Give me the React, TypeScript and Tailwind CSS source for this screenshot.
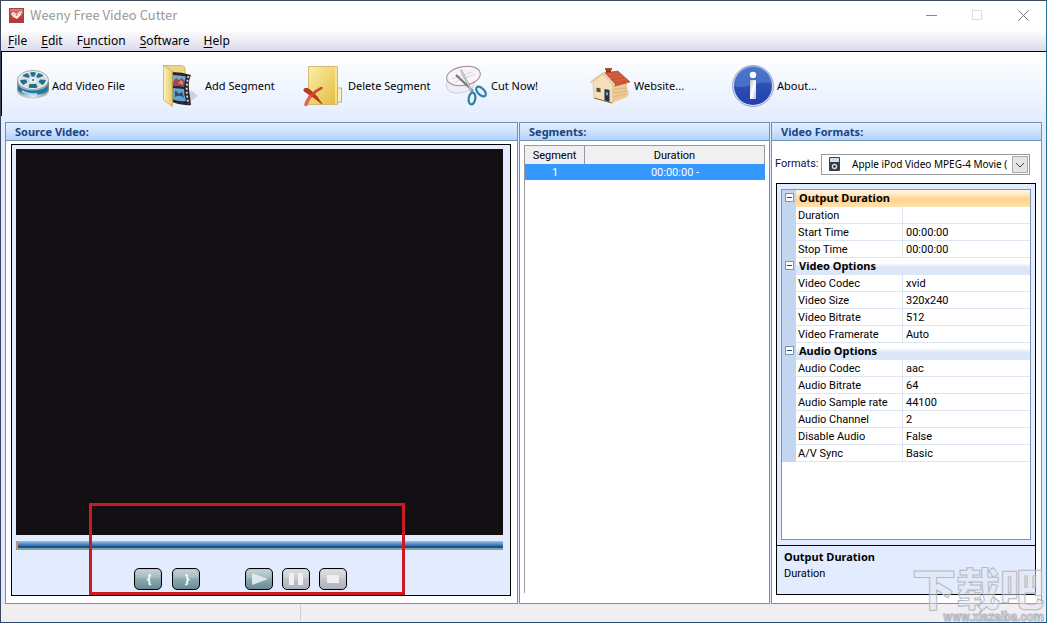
import { Fragment, useState } from "react";
import type { ReactNode } from "react";

const mnemonics = ["File", "Edit", "Function", "Software", "Help"];

function Logo() {
  return (
    <svg viewBox="0 0 15 15" className="h-[15px] w-[15px]">
      <defs>
        <linearGradient id="logo" x1="0" y1="0" x2="0" y2="1">
          <stop offset="0" stopColor="#d98a84" />
          <stop offset="0.5" stopColor="#c9403c" />
          <stop offset="1" stopColor="#b8332f" />
        </linearGradient>
      </defs>
      <rect width="15" height="15" fill="url(#logo)" />
      <rect x="0.5" y="0.5" width="14" height="14" fill="none" stroke="#9d4643" />
      <path d="M2 6l2-2 2 1 2 1 2-2 3-1-1 4-2 2-2 2-2-1-2-1z" fill="#fbe9e7" />
      <circle cx="7.500" cy="7" r="1" fill="#e0736c" />
      <path d="M4 6l1 1M10 5l1 1" stroke="#e0736c" />
    </svg>
  );
}

function Icon({ children }: { children: ReactNode }) {
  return (
    <svg viewBox="0 0 44 44" className="h-11 w-11 shrink-0" aria-hidden="true">
      {children}
    </svg>
  );
}

function ReelIcon() {
  return (
    <Icon>
      <defs>
        <linearGradient id="rim" x1="0" x2="1">
          <stop offset="0" stopColor="#8d9398" />
          <stop offset="0.5" stopColor="#e8ecee" />
          <stop offset="1" stopColor="#7d8489" />
        </linearGradient>
      </defs>
      <ellipse cx="28" cy="27" rx="16" ry="7.500" fill="#c3c8ce" />
      <path d="M12 17v8c1 6 8 8.500 16 8.500s15-2.500 16-8.500v-8z" fill="url(#rim)" />
      <path d="M13 21c3 7 27 7 30 0v5c-4 6.500-26 6.500-30 0z" fill="#1f7ba0" />
      <path d="M17 27c4 3 11 3.500 15 3" stroke="#b8dbe7" strokeWidth="2" fill="none" />
      <ellipse cx="28" cy="16" rx="15.500" ry="9.500" fill="#f0f3f4" stroke="#8a9298" strokeWidth="0.8" />
      <ellipse cx="28" cy="16" rx="13.500" ry="8" fill="#d8dee1" />
      <g fill="#236f92">
        <path d="M25 8.500q3-.8 6 0l-1.500 4h-3z" />
        <path d="M33.500 9q3.500 1 5 3l-5.500 2-2-1.500z" />
        <path d="M35 15.500l6 .500q-.5 3-3.500 5l-4-3z" />
        <path d="M24.500 20h7l1 3.500q-4.500 1.200-9 0z" />
        <path d="M21 15.500l-6 .500q.5 3 3.500 5l4-3z" />
        <path d="M22.500 9q-3.500 1-5 3l5.500 2 2-1.500z" />
      </g>
      <ellipse cx="28" cy="16" rx="3" ry="2" fill="#fff" />
      <ellipse cx="28" cy="16" rx="1.500" ry="1" fill="#666" />
    </Icon>
  );
}

function SegmentIcon() {
  return (
    <Icon>
      <defs>
        <linearGradient id="fold" x1="0" x2="1">
          <stop offset="0" stopColor="#fdf3bd" />
          <stop offset="1" stopColor="#e3c860" />
        </linearGradient>
      </defs>
      <path d="M30 39l10-7-7-6z" fill="#cbd2da" />
      <path d="M5.500 1.500H24l3 2V12H14z" fill="#ecd683" stroke="#c3a557" strokeWidth="0.700" />
      <path d="M14 8q10 0 19 3-3 6-2 14t2 16q-10 1-19-3z" fill="#29252a" />
      <path d="M15 11q7 0 13 1.500-2 5-2 10l-11-1z" fill="#7aa9cf" />
      <path d="M15 18l3-4 3 2 3-2 2.500 3-.5 5.500-11-1z" fill="#a34350" />
      <path d="M20 19l3-3 2 2v3z" fill="#d18a67" />
      <path d="M15 24l11 1q0 6 2 12-7 1-13-1.500z" fill="#5fa4d6" />
      <path d="M17 27q3 0 3 3l4-2 2 6q-4-4-9-1z" fill="#344c64" />
      <path d="M30.500 12q-3.500 12 0 28" stroke="#dfe3e6" strokeWidth="1.800" strokeDasharray="2 2" fill="none" />
      <path d="M5.500 1.500L14.500 7v35.500L5.500 36z" fill="url(#fold)" stroke="#c3a557" strokeWidth="0.700" />
    </Icon>
  );
}

function DeleteIcon() {
  return (
    <Icon>
      <defs>
        <linearGradient id="file" x1="0" y1="0" x2="1" y2="1">
          <stop offset="0" stopColor="#fbeea6" />
          <stop offset="1" stopColor="#e3bb3e" />
        </linearGradient>
      </defs>
      <path d="M36 24h4.500v14H36z" fill="#faf0c8" stroke="#b79c53" strokeWidth="0.8" />
      <path d="M7.500 2.500h29v38h-29z" fill="url(#file)" stroke="#c9ad60" strokeWidth="0.800" />
      <path d="M35 3v37" stroke="#fff3b5" strokeWidth="1.2" />
      <path d="M3 25q3-2 6 1 7 5 12 14-8-7-18-13z" fill="#ba3a20" stroke="#ba3a20" />
      <path d="M20.500 24q-11 5-15.500 16.500" stroke="#cf4a30" strokeWidth="2.500" fill="none" strokeLinecap="round" />
      <path d="M5 40.500q1-4 3.500-7" stroke="#dd6a50" strokeWidth="3.500" fill="none" strokeLinecap="round" />
    </Icon>
  );
}

function CutIcon() {
  return (
    <Icon>
      <path d="M3 17c-4 15 14 14 25 8l5-14z" fill="#f0eef5" stroke="#c9c4cf" strokeWidth="0.8" />
      <ellipse cx="19.500" cy="12" rx="17" ry="9.500" transform="rotate(-10 19.500 12)" fill="#f6f3f9" stroke="#ac8293" />
      <path d="M8 15l20-7M11 18l20-8" stroke="#cfcbd6" strokeWidth="0.8" />
      <path d="M12 11l17 16" stroke="#77716f" strokeWidth="2" />
      <path d="M17 6l11 22" stroke="#9c9b9b" strokeWidth="2" />
      <path d="M17 6l10 20" stroke="#f7f7f7" strokeWidth="0.7" />
      <ellipse cx="28" cy="34.500" rx="3.300" ry="6" transform="rotate(8 28 34.500)" fill="#e9f2fa" stroke="#3580a8" strokeWidth="2.200" />
      <ellipse cx="37" cy="27.500" rx="3.300" ry="6" transform="rotate(-45 37 27.500)" fill="#e9f2fa" stroke="#3580a8" strokeWidth="2.200" />
    </Icon>
  );
}

function HouseIcon() {
  return (
    <Icon>
      <path d="M24 38l18-7-3-12-15 6z" fill="#b9aa9b" opacity="0.5" />
      <path d="M6 17l11-8 9 11v19L7 34z" fill="#f6dfb7" stroke="#d9bd90" strokeWidth="0.700" />
      <path d="M25 20l15-1v14l-15 6z" fill="#ecca94" />
      <path d="M26 25l14-1M26 29l14-2M26 33l14-3" stroke="#d5a972" strokeWidth="0.6" />
      <path d="M19 11V5h5v6z" fill="#91301b" />
      <path d="M18 4h7v2h-7z" fill="#b34b2f" />
      <path d="M16 9l15-2 12 11-15 4z" fill="#cc5534" stroke="#a84229" strokeWidth="0.600" />
      <path d="M20 11l13-2M22 14l14-2M25 18l14-3" stroke="#da7452" strokeWidth="0.6" />
      <path d="M3 18L16 8.500l11.500 13" fill="none" stroke="#eee2d6" strokeWidth="2" />
      <path d="M3 19L16 9.500l11.500 13" fill="none" stroke="#b88d72" strokeWidth="0.500" />
      <path d="M9 23l5 1v5l-5-1z" fill="#565044" stroke="#fff0cf" strokeWidth="0.8" />
      <path d="M17.500 25l5 1v12l-5-1.500z" fill="#1f3650" />
      <path d="M19 28l2 .5v3l-2-.5z" fill="#7fa2bc" />
      <path d="M7 34l18 5" stroke="#97683d" />
    </Icon>
  );
}

function InfoIcon() {
  return (
    <Icon>
      <defs>
        <linearGradient id="info" x1="0" y1="0" x2="0" y2="1">
          <stop offset="0" stopColor="#3760b8" />
          <stop offset="1" stopColor="#233fae" />
        </linearGradient>
        <linearGradient id="stem" x1="0" y1="0" x2="1" y2="1">
          <stop offset="0" stopColor="#b6bdc9" />
          <stop offset="0.500" stopColor="#fff" />
          <stop offset="1" stopColor="#b7bfce" />
        </linearGradient>
      </defs>
      <circle cx="23" cy="22" r="20.500" fill="#dce4f2" stroke="#8797be" strokeWidth="0.8" />
      <circle cx="23" cy="22" r="19" fill="url(#info)" />
      <path d="M4 22a19 19 0 0 1 38-2q-7-3-19 0-10 5-19 2z" fill="#5983d0" opacity="0.6" />
      <circle cx="23" cy="11" r="3.200" fill="#fff" />
      <rect x="20" y="16" width="6" height="19" rx="0.500" fill="url(#stem)" />
    </Icon>
  );
}

const tools = [
  { label: "Add Video File", icon: <ReelIcon />, box: "w-[153px]" },
  { label: "Add Segment", icon: <SegmentIcon />, box: "w-[143px]" },
  { label: "Delete Segment", icon: <DeleteIcon />, box: "w-[143px]" },
  { label: "Cut Now!", icon: <CutIcon />, box: "w-[143px]" },
  { label: "Website...", icon: <HouseIcon />, box: "w-[143px]" },
  { label: "About...", icon: <InfoIcon />, box: "w-[143px]" },
];

const groups = [
  {
    name: "Output Duration",
    rows: [["Duration", ""], ["Start Time", "00:00:00"], ["Stop Time", "00:00:00"]],
  },
  {
    name: "Video Options",
    rows: [["Video Codec", "xvid"], ["Video Size", "320x240"], ["Video Bitrate", "512"], ["Video Framerate", "Auto"]],
  },
  {
    name: "Audio Options",
    rows: [
      ["Audio Codec", "aac"],
      ["Audio Bitrate", "64"],
      ["Audio Sample rate", "44100"],
      ["Audio Channel", "2"],
      ["Disable Audio", "False"],
      ["A/V Sync", "Basic"],
    ],
  },
];

function Panel({ title, children }: { title: string; children: ReactNode }) {
  return (
    <section className="flex min-w-0 flex-col border border-[#6d93b3] bg-white font-[Roboto,sans-serif]">
      <h2 className="h-[18px] border-b border-[#6d93b3] bg-linear-to-b from-[#e6f1ff] to-[#b3d2fb] pl-[9px] font-['Noto_Sans',sans-serif] text-[11px] leading-[18px] font-bold text-[#1c4380]">
        {title}
      </h2>
      {children}
    </section>
  );
}

function PlayerButton({ label, muted, children }: { label: string; muted?: boolean; children: ReactNode }) {
  const tone = muted ? "from-[#d6d7dd] to-[#aeb0ba]" : "from-[#b7cacd] to-[#678a94]";
  return (
    <button
      aria-label={label}
      className={"flex h-[22px] w-7 items-center justify-center rounded-[5px] border border-black bg-linear-to-b font-['Noto_Sans',sans-serif] " + tone}
    >
      <svg viewBox="0 0 26 20" className="h-5 w-[26px]">
        <path d="M1 9V4q0-3 3-3h18q3 0 3 3v5z" fill="#fff" opacity="0.18" />
        {children}
      </svg>
    </button>
  );
}

function PropertyGrid() {
  const [closed, setClosed] = useState<string[]>([]);
  const toggle = (name: string) =>
    setClosed((now) => (now.includes(name) ? now.filter((n) => n !== name) : [...now, name]));
  return (
    <table className="w-full table-fixed border-separate border-spacing-0 text-left leading-[14px]">
      <colgroup>
        <col className="w-[14px]" />
        <col className="w-[107px]" />
        <col />
      </colgroup>
      <tbody>
        {groups.map((group, index) => (
          <Fragment key={group.name}>
            <tr className="h-[17px]">
              <td className="bg-[#c2d7ef] p-0 pb-0.5">
                <button
                  aria-label={"Toggle " + group.name}
                  onClick={() => toggle(group.name)}
                  className="mx-auto flex h-[9px] w-[9px] items-center justify-center border border-[#7895b3] bg-white"
                >
                  <span className="h-px w-[5px] bg-[#26456a]" />
                </button>
              </td>
              <th
                colSpan={2}
                className={
                  index === 0
                    ? "bg-linear-to-b from-[#fff3e0] from-10% via-[#ffd28c] via-55% to-[#ffe2b0] p-0 pb-0.5 pl-[3px] font-['Noto_Sans',sans-serif] font-bold"
                    : "bg-linear-to-b from-white from-30% via-[#dbe6f6] via-55% to-[#dbe6f6] p-0 pb-0.5 pl-[3px] font-['Noto_Sans',sans-serif] font-bold"
                }
              >
                {group.name}
              </th>
            </tr>
            {!closed.includes(group.name) &&
              group.rows.map(([name, value]) => (
                <tr key={name} className="h-[17px]">
                  <td className="bg-[#c2d7ef] p-0" />
                  <td className="border-r border-b border-[#dce6f2] p-0 pt-0.5 pl-0.5">{name}</td>
                  <td className="border-b border-[#dce6f2] p-0 pt-0.5 pl-[3px]">{value}</td>
                </tr>
              ))}
          </Fragment>
        ))}
      </tbody>
    </table>
  );
}

export default function App() {
  return (
    <div className="relative flex min-h-screen flex-col overflow-hidden border border-t-[#3c4a5a] border-r-[#2a7299] border-b-[#2c4d70] border-l-[#39465a] bg-[#e3ecfe] font-['Noto_Sans','Noto_Sans_CJK_SC',sans-serif] text-[11px] text-black">
      <header className="flex h-[29px] items-center bg-white pl-2 text-[#999]">
        <Logo />
        <h1 className="ml-1.5 grow pb-0.5 font-['Noto_Sans_CJK_SC',sans-serif] text-[13px]">Weeny Free Video Cutter</h1>
        <button aria-label="Minimize" className="flex h-full w-[46px] items-center justify-center">
          <svg viewBox="0 0 11 11" className="h-[11px] w-[11px]"><path d="M0 5.500h11" stroke="#888" /></svg>
        </button>
        <button aria-label="Maximize" className="flex h-full w-[46px] items-center justify-center">
          <svg viewBox="0 0 11 11" className="h-[11px] w-[11px]"><rect x="0.500" y="0.500" width="9" height="9" fill="none" stroke="#ddd" /></svg>
        </button>
        <button aria-label="Close" className="flex h-full w-[46px] items-center justify-center">
          <svg viewBox="0 0 11 11" className="h-[11px] w-[11px]"><path d="M0.500 0.500l10 10M10.500 0.500l-10 10" stroke="#777" /></svg>
        </button>
      </header>
      <nav className="flex h-[21px] items-center gap-3.5 bg-linear-to-b from-white to-[#dadaea] pl-[7px] text-[12px]">
        {mnemonics.map((item) => {
          const at = item === "Function" ? 1 : 0;
          return (
            <button key={item}>
              {item.slice(0, at)}
              <span className="underline underline-offset-2">{item[at]}</span>
              {item.slice(at + 1)}
            </button>
          );
        })}
      </nav>
      <div className="border-t border-black bg-linear-to-b from-white to-[#e3ecfe]">
        <div className="flex h-16 items-start border-l border-black pt-3 pl-[3px]">
          {tools.map((tool) => (
            <button key={tool.label} className={"flex items-center gap-[3px] whitespace-nowrap " + tool.box}>
              {tool.icon}
              {tool.label}
            </button>
          ))}
        </div>
        <div className="h-1.5" />
      </div>
      <main className="grid grow grid-cols-[1fr_251px_271px] gap-px bg-[#e3ecfe] px-1">
        <Panel title="Source Video:">
          <div className="relative mt-[3px] mr-1.5 mb-[7px] ml-[5px] flex grow flex-col border border-black bg-[#e3ecfe] pt-1 pr-[7px] pl-1">
            <div className="grow bg-[#121013]" />
            <div className="mt-1.5 flex h-[9px] flex-col border-l-2 border-[#c98e74] bg-[#7fa3a8]">
              <div className="h-[5px] bg-linear-to-b from-[#9cc4ea] to-[#2468b4]" />
              <div className="h-0.5 bg-[#1c5282]" />
            </div>
            <div className="mt-[18px] mb-[5px] ml-[118px] flex">
              <PlayerButton label="Mark start">
                <text x="14" y="14" textAnchor="middle" fontSize="12" fontWeight="bold" fill="#fff">{"{"}</text>
              </PlayerButton>
              <div className="w-2.5" />
              <PlayerButton label="Mark end">
                <text x="14" y="14" textAnchor="middle" fontSize="12" fontWeight="bold" fill="#fff">{"}"}</text>
              </PlayerButton>
              <div className="w-[45px]" />
              <PlayerButton label="Play"><path d="M6 4l16 6-16 6z" fill="#dce9ed" /></PlayerButton>
              <div className="w-[9px]" />
              <PlayerButton label="Pause" muted><path d="M6 4h5v12H6zM15 4h5v12h-5z" fill="#eeeef3" /></PlayerButton>
              <div className="w-[9px]" />
              <PlayerButton label="Stop" muted><path d="M7 6h12v8H7z" fill="#eeeef3" /></PlayerButton>
            </div>
            <div className="pointer-events-none absolute bottom-0 left-[77px] h-[92px] w-[316px] border-3 border-[#cb1a20]" />
          </div>
        </Panel>
        <Panel title="Segments:">
          <div className="mx-1 mt-1 mb-2.5 grow border-t border-l border-[#999]">
            <table className="w-full table-fixed border-separate border-spacing-0 text-center leading-[14px]">
              <colgroup>
                <col className="w-[60px]" />
                <col />
              </colgroup>
              <thead>
                <tr className="h-[18px] bg-[#f0eff1]">
                  <th className="border-r border-[#999] p-0 pt-0.5 font-normal">Segment</th>
                  <th className="border-r border-[#999] p-0 pt-0.5 font-normal">Duration</th>
                </tr>
              </thead>
              <tbody>
                <tr className="h-4 bg-[#3598fe] text-white">
                  <td className="p-0 pt-0.5">1</td>
                  <td className="p-0 pt-0.5">00:00:00 -</td>
                </tr>
              </tbody>
            </table>
          </div>
        </Panel>
        <Panel title="Video Formats:">
          <div className="mt-[13px] mr-[11px] ml-[3px] flex h-[21px] items-center justify-between">
            <label htmlFor="formats" className="text-[#10104c]">Formats:</label>
            <div className="relative h-full w-[209px]">
              <select
                id="formats"
                className="h-full w-full appearance-none border border-[#999] bg-white pr-[18px] pl-[30px] font-['Noto_Sans',sans-serif] text-[10px]"
              >
                <option>Apple iPod Video MPEG-4 Movie (</option>
              </select>
              <svg viewBox="0 0 11 14" className="pointer-events-none absolute top-[3px] left-2 h-3.5 w-[11px]">
                <rect width="11" height="14" rx="1" fill="#3b3d40" />
                <path d="M1 1h9v4H1z" fill="#c9e3f4" />
                <circle cx="5.500" cy="9.500" r="2.700" fill="#ddd" />
                <circle cx="5.500" cy="9.500" r="1.200" fill="#222" />
              </svg>
              <svg viewBox="0 0 16 17" className="pointer-events-none absolute top-0.5 right-0.5 h-[17px] w-4">
                <rect x="0.500" y="0.500" width="15" height="16" fill="#e4e4e4" stroke="#aaa" />
                <path d="M4 7l4 4 4-4" fill="none" stroke="#444" />
              </svg>
            </div>
          </div>
          <div className="mt-2 mr-[5px] mb-2 ml-1 flex grow flex-col border border-black bg-[#e3ecfe]">
            <div className="mx-1 mt-[5px] mb-[5px] grow border border-[#7f93ab] bg-white">
              <PropertyGrid />
            </div>
            <div className="h-[49px] border-t border-black pt-[3px] pl-[7px] leading-4">
              <h3 className="font-['Noto_Sans',sans-serif] font-bold">Output Duration</h3>
              <p className="leading-[18px]">Duration</p>
            </div>
          </div>
        </Panel>
      </main>
      <footer className="flex h-[18px] bg-[#f0eef1]">
        <div className="my-px w-[300px] border-r border-[#d0d0d4]" />
      </footer>
      <div className="pointer-events-none absolute right-0.5 bottom-0 flex flex-col items-end font-black whitespace-nowrap text-[#e4e7ef]/50 [-webkit-text-stroke:1px_#b4b9c3]">
        <span className="text-[44px] leading-[46px]">下载吧</span>
        <span className="font-[Roboto,sans-serif] text-[12px] leading-[10px] font-bold">www.xiazaiba.com</span>
      </div>
    </div>
  );
}
